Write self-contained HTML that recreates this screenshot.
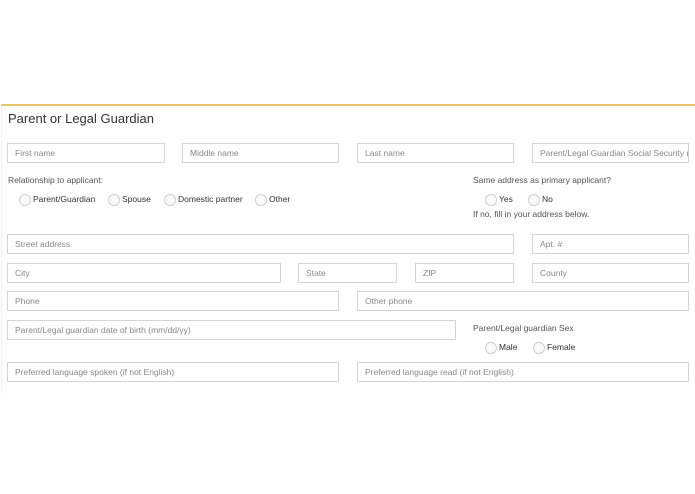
<!DOCTYPE html><html><head><style>
body{margin:0;width:695px;height:494px;background:#fff;font-family:"Liberation Sans",sans-serif;position:relative;overflow:hidden}
.card{position:absolute;left:1px;top:104px;width:694px;height:288px;border-top:2px solid #e6c46a;border-left:1px solid #f0f0f0}
.t{position:absolute;color:#333;white-space:nowrap}
.i{position:absolute;border:1px solid #d4d4d4;font-size:8.5px;color:#888;line-height:18px;padding-left:7px;box-sizing:border-box;height:20px;overflow:hidden;white-space:nowrap}
.l{position:absolute;font-size:8.5px;color:#555;white-space:nowrap}
.r{position:absolute;width:10px;height:10px;border:1px solid #d0d0d0;border-radius:50%;background:#fafafa}
.rl{position:absolute;font-size:8.5px;color:#333;white-space:nowrap}
</style></head><body>
<div class="card"></div>
<div class="t" style="left:8px;top:111px;font-size:13px">Parent or Legal Guardian</div>
<div class="i" style="left:7px;top:143px;width:158px">First name</div>
<div class="i" style="left:182px;top:143px;width:157px">Middle name</div>
<div class="i" style="left:357px;top:143px;width:157px">Last name</div>
<div class="i" style="left:532px;top:143px;width:157px">Parent/Legal Guardian Social Security number</div>
<div class="l" style="left:8px;top:175px">Relationship to applicant:</div>
<div class="r" style="left:19px;top:194px"></div><div class="rl" style="left:33px;top:194px">Parent/Guardian</div>
<div class="r" style="left:108px;top:194px"></div><div class="rl" style="left:122px;top:194px">Spouse</div>
<div class="r" style="left:164px;top:194px"></div><div class="rl" style="left:178px;top:194px">Domestic partner</div>
<div class="r" style="left:255px;top:194px"></div><div class="rl" style="left:269px;top:194px">Other</div>
<div class="l" style="left:473px;top:175px">Same address as primary applicant?</div>
<div class="r" style="left:485px;top:194px"></div><div class="rl" style="left:499px;top:194px">Yes</div>
<div class="r" style="left:528px;top:194px"></div><div class="rl" style="left:542px;top:194px">No</div>
<div class="l" style="left:473px;top:209px">If no, fill in your address below.</div>
<div class="i" style="left:7px;top:234px;width:507px">Street address</div>
<div class="i" style="left:532px;top:234px;width:157px">Apt. #</div>
<div class="i" style="left:7px;top:263px;width:274px">City</div>
<div class="i" style="left:298px;top:263px;width:99px">State</div>
<div class="i" style="left:415px;top:263px;width:99px">ZIP</div>
<div class="i" style="left:532px;top:263px;width:157px">County</div>
<div class="i" style="left:7px;top:291px;width:332px">Phone</div>
<div class="i" style="left:357px;top:291px;width:332px">Other phone</div>
<div class="i" style="left:7px;top:320px;width:449px">Parent/Legal guardian date of birth (mm/dd/yy)</div>
<div class="l" style="left:473px;top:323px">Parent/Legal guardian Sex</div>
<div class="r" style="left:485px;top:342px"></div><div class="rl" style="left:499px;top:342px">Male</div>
<div class="r" style="left:533px;top:342px"></div><div class="rl" style="left:547px;top:342px">Female</div>
<div class="i" style="left:7px;top:362px;width:332px">Preferred language spoken (if not English)</div>
<div class="i" style="left:357px;top:362px;width:332px">Preferred language read (if not English)</div>
</body></html>
